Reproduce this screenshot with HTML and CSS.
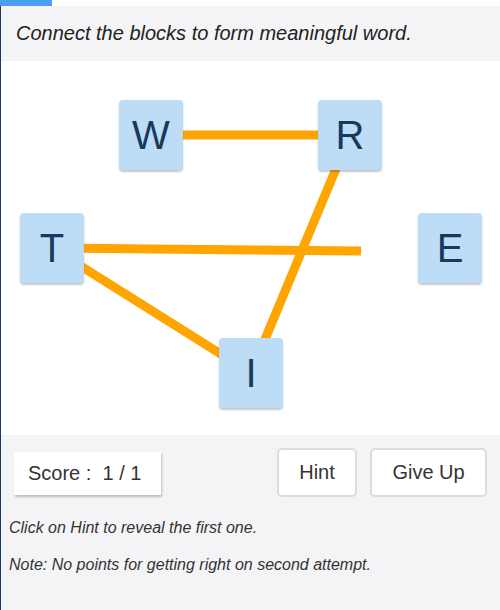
FILE: index.html
```html
<!DOCTYPE html>
<html>
<head>
<meta charset="utf-8">
<link rel="stylesheet" href="styles.css">
</head>
<body>
<div class="topbar"></div>
<div class="app">
  <div class="header">Connect the blocks to form meaningful word.</div>
  <div class="board">
    <svg class="lines" width="499" height="374" viewBox="0 0 499 374">
      <g stroke="#ffa500" stroke-width="9" fill="none">
        <line x1="150" y1="74" x2="349" y2="74"/>
        <line x1="51" y1="187" x2="360" y2="190"/>
        <line x1="51" y1="187" x2="250" y2="312"/>
        <line x1="349" y1="74" x2="250" y2="312"/>
      </g>
    </svg>
    <div class="block b-w">W</div>
    <div class="block b-r">R</div>
    <div class="block b-t">T</div>
    <div class="block b-e">E</div>
    <div class="block b-i">I</div>
  </div>
  <div class="footer">
    <div class="controls">
      <div class="score">Score :&nbsp; 1 / 1</div>
      <div class="spacer"></div>
      <button class="btn">Hint</button>
      <button class="btn btn-give">Give Up</button>
    </div>
    <p class="note">Click on Hint to reveal the first one.</p>
    <p class="note">Note: No points for getting right on second attempt.</p>
  </div>
</div>
</body>
</html>
```

FILE: styles.css
```css
html, body {
  margin: 0;
  padding: 0;
  background: #ffffff;
  font-family: "Liberation Sans", Arial, sans-serif;
  color: #333333;
}

.topbar {
  width: 52px;
  height: 6px;
  background: #4a9ff2;
}

.app {
  border-left: 1px solid #1c3a5b;
  height: 604px;
  display: flex;
  flex-direction: column;
}

.header {
  height: 55px;
  background: #f4f4f6;
  display: flex;
  align-items: center;
  padding-left: 15px;
  font-size: 20px;
  font-style: italic;
  color: #222222;
}

.board {
  position: relative;
  height: 374px;
  background: #ffffff;
}

.lines {
  position: absolute;
  left: 0;
  top: 0;
}

.block {
  position: absolute;
  width: 64px;
  height: 70px;
  background: #bddcf5;
  border-radius: 4px;
  box-shadow: 0 2px 2px rgba(0, 0, 0, 0.22);
  display: flex;
  align-items: center;
  justify-content: center;
  font-size: 40px;
  color: #173a5c;
}

.b-w { left: 118px; top: 39px; }
.b-r { left: 317px; top: 39px; }
.b-t { left: 19px; top: 152px; }
.b-e { left: 417px; top: 152px; }
.b-i { left: 218px; top: 277px; }

.footer {
  flex: 1;
  background: #f4f4f6;
  padding: 13px 13px 0 8px;
}

.controls {
  display: flex;
  align-items: flex-end;
  gap: 13px;
  padding-left: 5px;
}

.score {
  width: 147px;
  height: 43px;
  box-sizing: border-box;
  background: #ffffff;
  box-shadow: 1px 2px 2px rgba(0, 0, 0, 0.22);
  display: flex;
  align-items: center;
  padding-left: 14px;
  font-size: 20px;
  color: #333333;
  margin-bottom: 2px;
}

.spacer {
  flex: 1;
}

.btn {
  height: 49px;
  width: 80px;
  background: #ffffff;
  border: 2px solid #dcdcdc;
  border-radius: 5px;
  font-family: "Liberation Sans", Arial, sans-serif;
  font-size: 20px;
  color: #333333;
  padding: 0;
}

.btn-give {
  width: 117px;
}

.note {
  margin: 22px 0 0 0;
  font-size: 16px;
  line-height: 18px;
  font-style: italic;
  color: #333333;
}

.note + .note {
  margin-top: 19px;
}
```
